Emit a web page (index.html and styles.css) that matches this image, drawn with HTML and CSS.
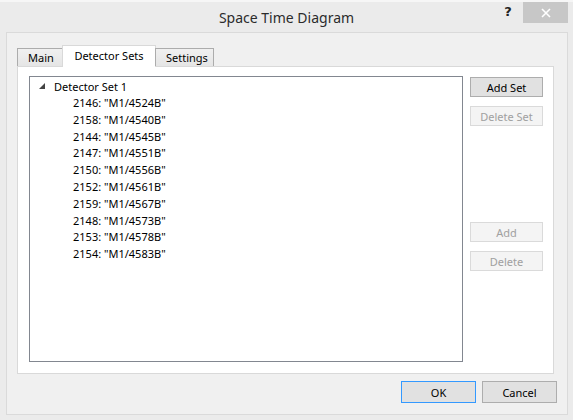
FILE: index.html
```html
<!DOCTYPE html>
<html lang="en">
<head>
<meta charset="utf-8">
<title>Space Time Diagram</title>
<link rel="stylesheet" href="styles.css">
</head>
<body>
<div class="window">
  <div class="titlebar">
    <div class="title">Space Time Diagram</div>
    <div class="caption-btns">
      <span class="help">?</span>
      <span class="close">
        <svg width="10" height="10" viewBox="0 0 10 10"><path d="M1 1L9 9M9 1L1 9" stroke="#fff" stroke-width="1.6"/></svg>
      </span>
    </div>
  </div>
  <div class="client">
    <div class="tabs">
      <div class="tab">Main</div>
      <div class="tab active">Detector Sets</div>
      <div class="tab">Settings</div>
    </div>
    <div class="panel">
      <div class="tree">
        <div class="node">
          <svg class="expander" width="6" height="6" viewBox="0 0 6 6"><path d="M6 0V6H0Z" fill="#444"/></svg>
          <span>Detector Set 1</span>
        </div>
        <ul class="children">
          <li>2146: "M1/4524B"</li>
          <li>2158: "M1/4540B"</li>
          <li>2144: "M1/4545B"</li>
          <li>2147: "M1/4551B"</li>
          <li>2150: "M1/4556B"</li>
          <li>2152: "M1/4561B"</li>
          <li>2159: "M1/4567B"</li>
          <li>2148: "M1/4573B"</li>
          <li>2153: "M1/4578B"</li>
          <li>2154: "M1/4583B"</li>
        </ul>
      </div>
      <div class="side">
        <div class="group">
          <button class="btn">Add Set</button>
          <button class="btn" disabled>Delete Set</button>
        </div>
        <div class="group lower">
          <button class="btn" disabled>Add</button>
          <button class="btn" disabled>Delete</button>
        </div>
      </div>
    </div>
    <div class="footer">
      <button class="btn wide default">OK</button>
      <button class="btn wide">Cancel</button>
    </div>
  </div>
</div>
</body>
</html>
```
FILE: styles.css
```css
* { box-sizing: border-box; }

html, body {
  margin: 0;
  padding: 0;
}

body {
  width: 573px;
  height: 420px;
  background: #ebebeb;
  font-family: "Noto Sans", "Open Sans", sans-serif;
  font-size: 11px;
  color: #000;
  overflow: hidden;
}

.window {
  height: 420px;
  display: flex;
  flex-direction: column;
  border-top: 2px solid #f6f6f6;
}

/* caption bar */
.titlebar {
  height: 30px;
  position: relative;
  display: flex;
  justify-content: center;
  align-items: center;
}

.title {
  font-size: 14px;
  color: #2b2b2b;
  padding-top: 1px;
}

.caption-btns {
  position: absolute;
  right: 5px;
  top: 0;
  display: flex;
  align-items: flex-start;
}

.help {
  font-weight: bold;
  font-size: 13px;
  color: #222;
  width: 30px;
  text-align: center;
  line-height: 20px;
  font-family: "DejaVu Sans", sans-serif;
}

.close {
  width: 45px;
  height: 21px;
  background: #c7c7c7;
  display: flex;
  align-items: center;
  justify-content: center;
}

/* client area */
.client {
  flex: 1;
  margin: 0 5px 5px 6px;
  border: 1px solid #dadada;
  background: #f0f0f0;
  padding: 12px 0 0 10px;
  display: flex;
  flex-direction: column;
}

.tabs {
  display: flex;
  align-items: flex-end;
  height: 21px;
  position: relative;
  z-index: 1;
}

.tab {
  height: 18px;
  padding: 0 0 0 10px;
  border: 1px solid #acacac;
  border-bottom: none;
  background: linear-gradient(#f0f0f0, #e5e5e5);
  line-height: 18px;
  color: #000;
}

.tab:first-child { width: 46px; }

.tab.active {
  height: 22px;
  margin-bottom: -1px;
  background: #fff;
  border-color: #d9d9d9;
  width: 94px;
  text-align: center;
  padding: 2px 0 0;
  line-height: 16px;
}

.tab:last-child { width: 59px; }

.tab:first-child + .tab.active { margin-left: -1px; }
.tab.active + .tab { margin-left: -1px; }

.panel {
  width: 537px;
  height: 308px;
  background: #fff;
  border: 1px solid #d9d9d9;
  padding: 9px 0 0 11px;
  display: flex;
  gap: 7px;
}

.tree {
  width: 434px;
  height: 286px;
  border: 1px solid #828790;
  padding-top: 1px;
}

.node {
  height: 17px;
  display: flex;
  align-items: center;
  padding-left: 9px;
}

.expander {
  margin-right: 9px;
  margin-top: -2px;
}

.children {
  list-style: none;
  margin: 0;
  padding: 0 0 0 43px;
}

.children li {
  height: 16.8px;
  line-height: 16.8px;
}

.side {
  display: flex;
  flex-direction: column;
  padding-top: 1px;
}

.group {
  display: flex;
  flex-direction: column;
  gap: 9px;
}

.group.lower { margin-top: 96px; }

.btn {
  width: 73px;
  height: 20px;
  padding: 0;
  font: inherit;
  color: #000;
  background: #e1e1e1;
  border: 1px solid #adadad;
  border-radius: 0;
}

.btn:disabled {
  color: #a0a0a0;
  background: #f4f4f4;
  border-color: #dadada;
}

.footer {
  display: flex;
  justify-content: flex-end;
  gap: 6px;
  padding: 7px 10px 0 0;
}

.btn.wide {
  width: 75px;
  height: 22px;
}

.btn.default {
  border-color: #3399ff;
}
```
